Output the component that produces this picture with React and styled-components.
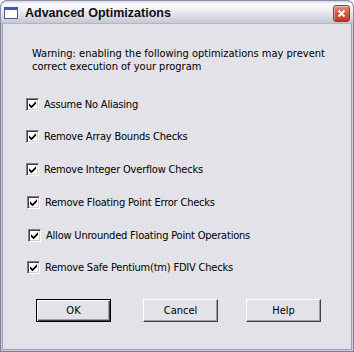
import React from "react";
import styled, { createGlobalStyle } from "styled-components";

const Global = createGlobalStyle`
  html, body { margin: 0; padding: 0; background: #ffffff; }
  body { font-family: "DejaVu Sans Condensed", "Liberation Sans", Arial, sans-serif; }
`;

const Window = styled.div`
  width: 354px;
  height: 352px;
  box-sizing: border-box;
  display: flex;
  flex-direction: column;
  border-radius: 7px 7px 0 0;
  overflow: hidden;
  background: #8f8ea8;
`;

const TitleBar = styled.div`
  height: 23px;
  flex: none;
  display: flex;
  align-items: center;
  padding: 0 3px 0 3px;
  box-sizing: border-box;
  border: 1px solid #8f8ea8;
  border-bottom: none;
  border-radius: 7px 7px 0 0;
  background: linear-gradient(#d6d6e2 0px, #fbfbfd 3px, #f2f2f6 8px, #e0e0e8 14px, #c6c6d4 22px);
`;

const AppIcon = styled.div`
  width: 14px;
  height: 12px;
  box-sizing: border-box;
  border: 1px solid #4a5a78;
  border-top: 3px solid #2d5fc8;
  background: #ffffff;
  margin-top: 2px;
`;

const Title = styled.div`
  flex: 1;
  margin-left: 7px;
  font-family: "Liberation Sans", Arial, sans-serif;
  font-size: 12.5px;
  font-weight: bold;
  color: #101010;
  margin-top: 1px;
`;

const CloseButton = styled.div`
  width: 17px;
  height: 17px;
  box-sizing: border-box;
  border-radius: 3px;
  border: 1px solid #9a3428;
  background: linear-gradient(#ec8e7c, #d65a46 45%, #c03a28);
  box-shadow: inset 1px 1px 0 rgba(255, 255, 255, 0.45);
  display: flex;
  align-items: center;
  justify-content: center;
  margin-top: 2px;
`;

const Frame = styled.div`
  flex: 1;
  display: flex;
  box-sizing: border-box;
  border: 1px solid #7f7e98;
  border-top: none;
  padding: 0 1px 1px 1px;
  background: #cfcfdc;
`;

const Body = styled.div`
  flex: 1;
  box-sizing: border-box;
  background: #e2e2e8;
  border-left: 1px solid #9d9cb2;
  border-right: 1px solid #9d9cb2;
  border-bottom: 1px solid #9d9cb2;
  border-top: 1px solid #b4b4c6;
  display: flex;
  flex-direction: column;
  padding: 23px 0 0 29px;
  font-family: "DejaVu Sans Condensed", "Liberation Sans", Arial, sans-serif;
  font-size: 11px;
  color: #000;
`;

const Warning = styled.div`
  line-height: 13px;
  width: 300px;
`;

const OptionList = styled.div`
  display: flex;
  flex-direction: column;
  gap: 16.8px;
  margin-top: 23px;
`;

const Option = styled.label`
  display: flex;
  align-items: center;
  height: 16px;
  margin-left: ${(p) => p.$shift || 0}px;
`;

const Box = styled.span`
  width: 13px;
  height: 13px;
  flex: none;
  box-sizing: border-box;
  background: #ffffff;
  border-top: 1px solid #808080;
  border-left: 1px solid #808080;
  border-right: 1px solid #ffffff;
  border-bottom: 1px solid #ffffff;
  box-shadow: inset 1px 1px 0 #404040, inset -1px -1px 0 #d4d0c8;
  display: flex;
  align-items: center;
  justify-content: center;
  margin-left: -6px;
`;

const Label = styled.span`
  margin-left: 5px;
  letter-spacing: -0.2px;
`;

const ButtonRow = styled.div`
  display: flex;
  margin-top: 23px;
  padding-left: 4px;
`;

const Button = styled.div`
  width: 75px;
  height: 23px;
  box-sizing: border-box;
  display: flex;
  align-items: center;
  justify-content: center;
  margin-left: ${(p) => p.$ml || 0}px;
  background: #e2e2e8;
  border-top: 1px solid #ffffff;
  border-left: 1px solid #ffffff;
  border-right: 1px solid #404040;
  border-bottom: 1px solid #404040;
  box-shadow: inset -1px -1px 0 #9d9da8;
  ${(p) =>
    p.$default &&
    `border: 1px solid #000; box-shadow: inset 1px 1px 0 #ffffff, inset -1px -1px 0 #404040, inset -2px -2px 0 #9d9da8;`}
`;

const Check = () => (
  <svg width="9" height="9" viewBox="0 0 9 9">
    <path d="M1 3.2 L3.5 5.7 L8 1.2 L8 3.8 L3.5 8.3 L1 5.8 Z" fill="#000" />
  </svg>
);

const options = [
  ["Assume No Aliasing", 0],
  ["Remove Array Bounds Checks", 0],
  ["Remove Integer Overflow Checks", 0],
  ["Remove Floating Point Error Checks", 1],
  ["Allow Unrounded Floating Point Operations", 2],
  ["Remove Safe Pentium(tm) FDIV Checks", 1],
];

export default function App() {
  return (
    <>
      <Global />
      <Window>
        <TitleBar>
          <AppIcon />
          <Title>Advanced Optimizations</Title>
          <CloseButton>
            <svg width="9" height="9" viewBox="0 0 9 9">
              <path d="M1.5 1.5 L7.5 7.5 M7.5 1.5 L1.5 7.5" stroke="#fff" strokeWidth="2" />
            </svg>
          </CloseButton>
        </TitleBar>
        <Frame>
          <Body>
            <Warning>
              Warning: enabling the following optimizations may prevent correct execution of your program
            </Warning>
            <OptionList>
              {options.map(([t, s]) => (
                <Option key={t} $shift={s}>
                  <Box>
                    <Check />
                  </Box>
                  <Label>{t}</Label>
                </Option>
              ))}
            </OptionList>
            <ButtonRow>
              <Button $default>OK</Button>
              <Button $ml={32}>Cancel</Button>
              <Button $ml={28}>Help</Button>
            </ButtonRow>
          </Body>
        </Frame>
      </Window>
    </>
  );
}
